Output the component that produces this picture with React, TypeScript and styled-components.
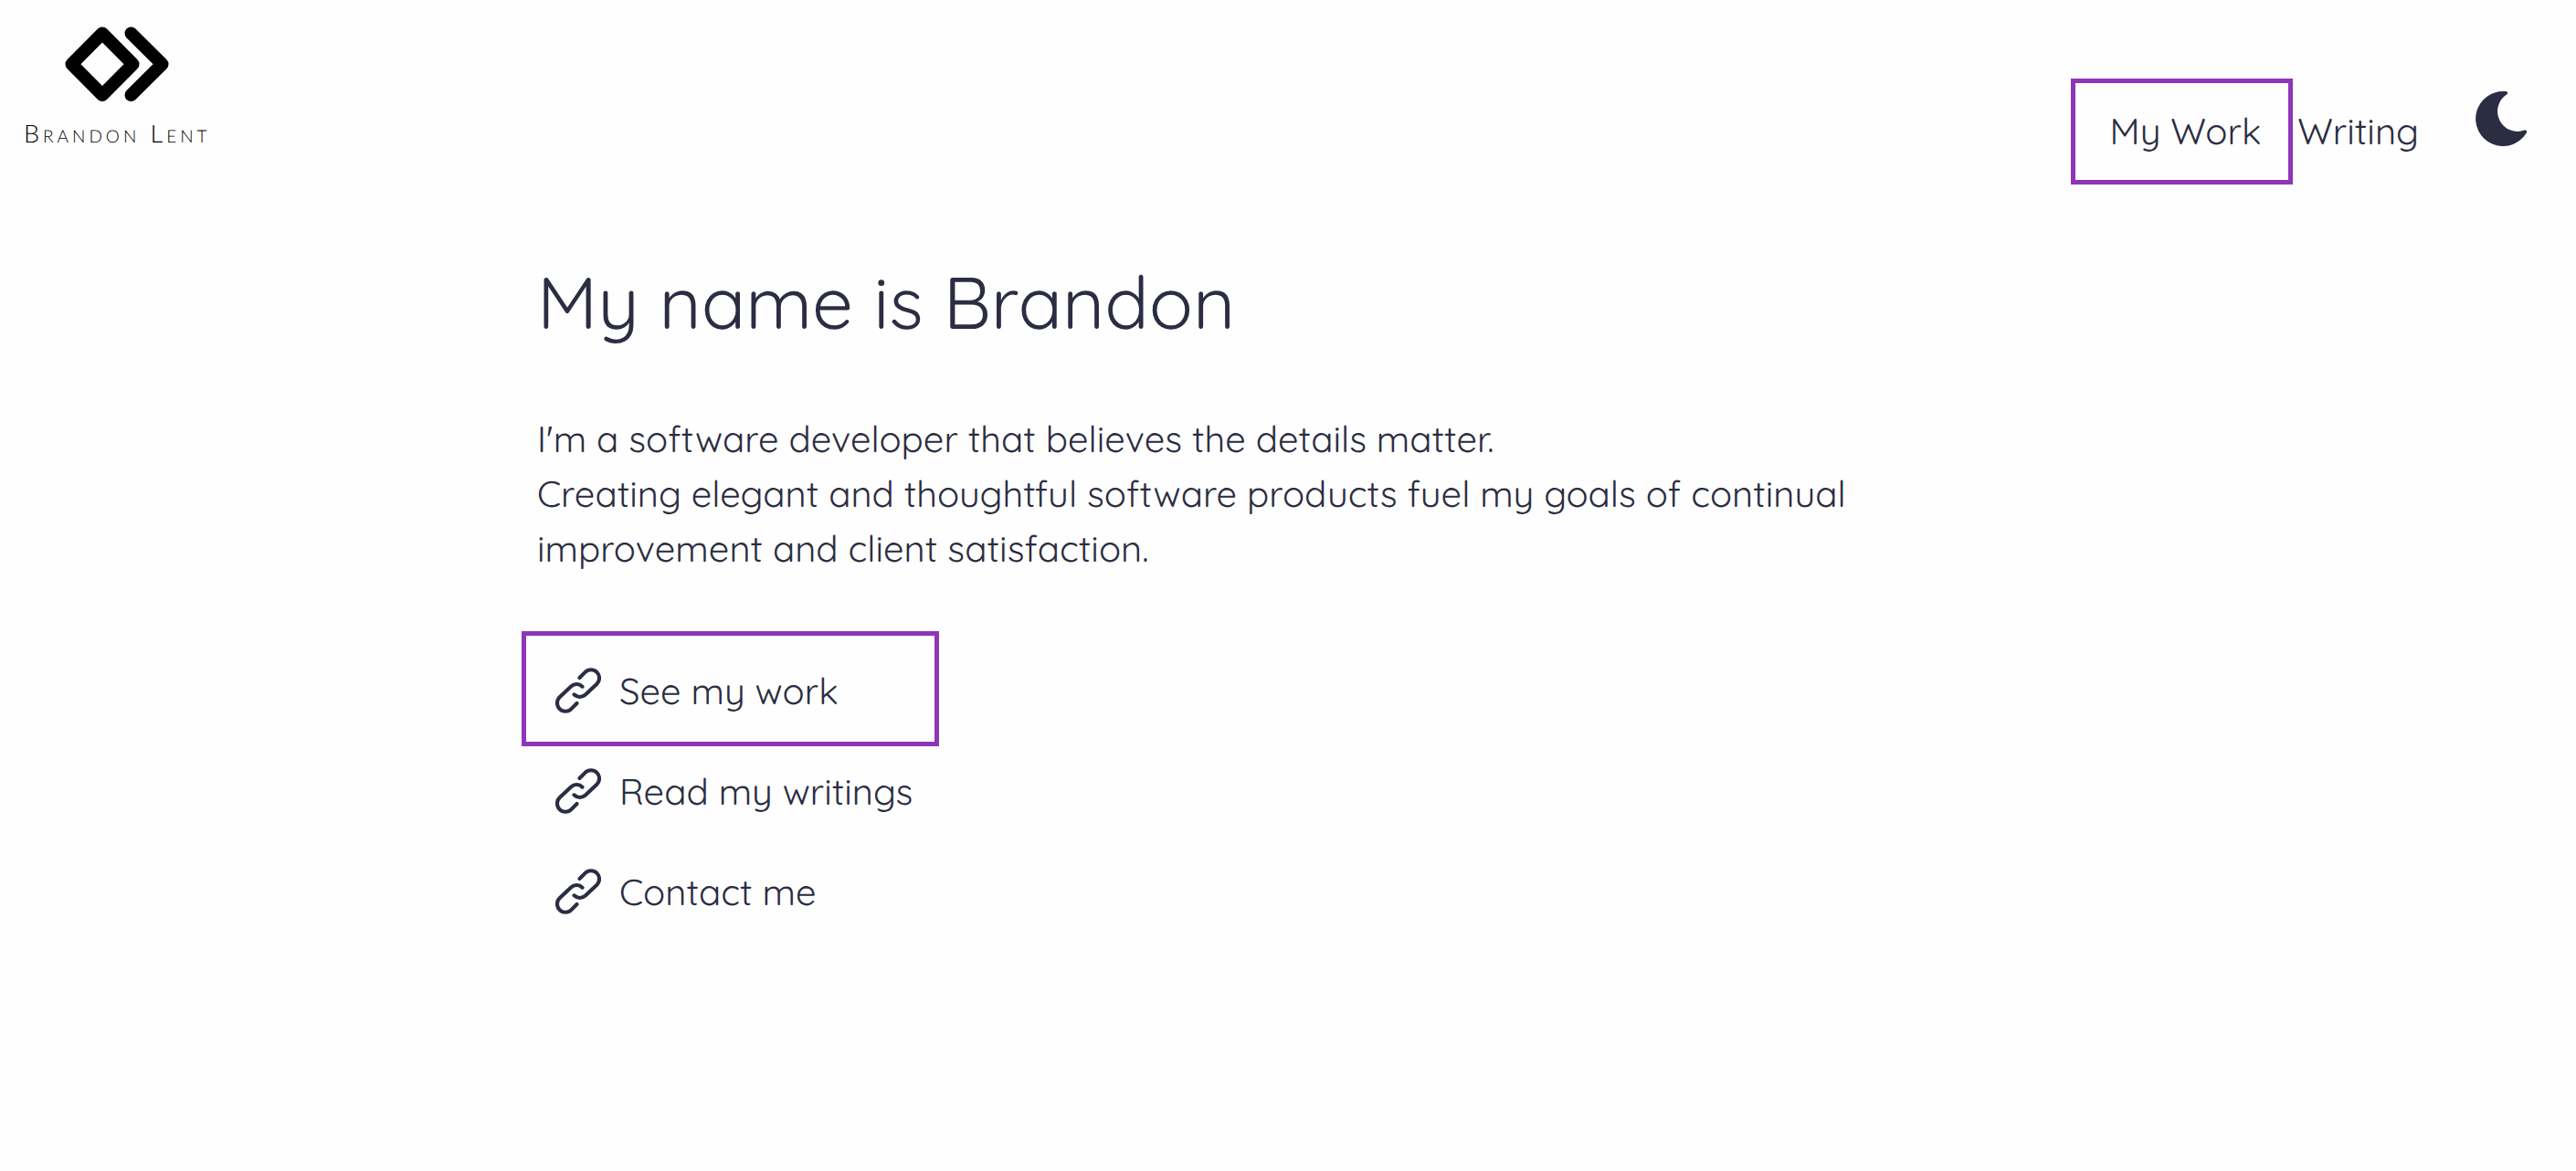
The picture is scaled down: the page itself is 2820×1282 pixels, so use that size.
import React from "react";
import styled, { createGlobalStyle, css } from "styled-components";

const ink = "#2b2d42";
const accent = "#8e35b9";

const GlobalStyle = createGlobalStyle`
  * { box-sizing: border-box; }
  body {
    margin: 0;
    background: #fefefe;
    color: ${ink};
    font-family: Quicksand, Lato, "Open Sans", sans-serif;
    font-size: 40px;
    font-weight: 400;
    line-height: 60px;
    text-rendering: geometricPrecision;
  }
`;

const Header = styled.header`
  display: flex;
  justify-content: space-between;
  align-items: flex-start;
  padding: 28px 54px 0 26px;
`;

const Brand = styled.a`
  display: flex;
  flex-direction: column;
  align-items: center;
  color: #000;
  text-decoration: none;
`;

const BrandMark = styled.svg`
  width: 116px;
  height: 84px;
`;

const BrandName = styled.span`
  margin-top: 16px;
  font-family: Lato, sans-serif;
  font-weight: 300;
  font-size: 27px;
  line-height: 36px;
  letter-spacing: 4px;
  font-variant-caps: small-caps;
`;

const Nav = styled.nav`
  display: flex;
  align-items: flex-start;
  padding-top: 85px;
  gap: 40px;
`;

const marked = css<{ $inset?: string }>`
  position: relative;

  &::after {
    content: "";
    position: absolute;
    inset: ${(p) => p.$inset};
    border: 5px solid ${accent};
    pointer-events: none;
  }
`;

const NavLink = styled.a<{ $inset?: string }>`
  color: inherit;
  text-decoration: none;
  ${(p) => p.$inset && marked}
`;

const ThemeButton = styled.button`
  display: flex;
  margin: -13px 0 0 22px;
  padding: 0;
  border: 0;
  background: none;
  color: inherit;
  cursor: pointer;

  svg {
    width: 56px;
    height: 60px;
  }
`;

const Main = styled.main`
  max-width: 1644px;
  margin: 0 auto;
`;

const Title = styled.h1`
  margin: 97px 0 0;
  font-weight: 400;
  font-size: 80px;
  line-height: 120px;
`;

const Intro = styled.p`
  margin: 60px 0 0;
`;

const Links = styled.ul`
  display: flex;
  flex-direction: column;
  align-items: flex-start;
  gap: 50px;
  margin: 96px 0 0;
  padding: 0 0 0 20px;
  list-style: none;
`;

const PageLink = styled.a<{ $inset?: string }>`
  display: flex;
  align-items: center;
  gap: 20px;
  color: inherit;
  text-decoration: none;
  ${(p) => p.$inset && marked}
`;

const LinkSvg = styled.svg`
  width: 50px;
  height: 50px;
`;

const LinkItem = styled.li`
  width: 420px;
`;

function LinkIcon() {
  return (
    <LinkSvg viewBox="0 0 50 50" fill="none" stroke="currentColor" strokeWidth="4.1" strokeLinecap="round" aria-hidden="true">
      <path d="M26.5 11 32.6 4.9A9 9 0 0 1 45.4 17.7L32.9 29.6A9 9 0 0 1 20.5 29.3" />
      <path d="M23.5 39 17.4 45.1A9 9 0 0 1 4.6 32.3L17.1 20.4A9 9 0 0 1 29.5 20.7" />
    </LinkSvg>
  );
}

const pages = [
  { label: "See my work", href: "#work", inset: "-35px 0 -31px -37px" },
  { label: "Read my writings", href: "#writings" },
  { label: "Contact me", href: "#contact" },
];

export default function App() {
  return (
    <>
      <GlobalStyle />
      <Header>
        <Brand href="#home">
          <BrandMark viewBox="0 0 116 84" fill="none" stroke="currentColor" strokeWidth="14" strokeLinejoin="round" strokeLinecap="round" aria-hidden="true">
            <path d="M42 8.500 75.500 42.300 42 76 8.500 42.300Z" />
            <path d="M73.500 8.500 107.500 42.300 73.500 76" />
          </BrandMark>
          <BrandName>Brandon Lent</BrandName>
        </Brand>
        <Nav>
          <NavLink href="#work" $inset="-27px -35px -29px -43px">My Work</NavLink>
          <NavLink href="#writing">Writing</NavLink>
          <ThemeButton type="button" aria-label="Switch to dark theme">
            <svg viewBox="0 0 56 60" fill="currentColor" aria-hidden="true">
              <path d="M33 .1A30 30 0 1 0 55.500 46C57 43 55.500 42.200 53.500 42.600A22 22 0 0 1 34 3.500C35.800 2 35.500 .5 33 .1Z" />
            </svg>
          </ThemeButton>
        </Nav>
      </Header>
      <Main>
        <Title>My name is Brandon</Title>
        <Intro>
          I'm a software developer that believes the details matter.
          <br />
          Creating elegant and thoughtful software products fuel my goals of continual improvement and client
          satisfaction.
        </Intro>
        <Links>
          {pages.map((page) => (
            <LinkItem key={page.label}>
              <PageLink href={page.href} $inset={page.inset}>
                <LinkIcon />
                {page.label}
              </PageLink>
            </LinkItem>
          ))}
        </Links>
      </Main>
    </>
  );
}
